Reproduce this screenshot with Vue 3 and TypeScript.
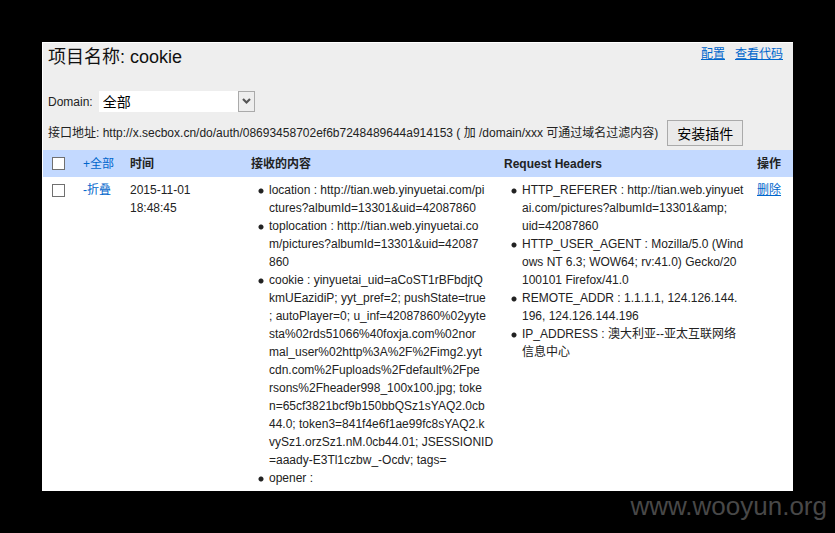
<script setup lang="ts">
import { ref } from 'vue'

interface Entry {
  id: number
  date: string
  time: string
  content: string[]
  headers: string[]
}

const domain = ref('all')
const allChecked = ref(false)
const selected = ref<number[]>([])

const entries: Entry[] = [
  {
    id: 1,
    date: '2015-11-01',
    time: '18:48:45',
    content: [
      'location : http://tian.web.yinyuetai.com/pi\nctures?albumId=13301&uid=42087860',
      'toplocation : http://tian.web.yinyuetai.co\nm/pictures?albumId=13301&uid=42087\n860',
      'cookie : yinyuetai_uid=aCoST1rBFbdjtQ\nkmUEazidiP; yyt_pref=2; pushState=true\n; autoPlayer=0; u_inf=42087860%02yyte\nsta%02rds51066%40foxja.com%02nor\nmal_user%02http%3A%2F%2Fimg2.yyt\ncdn.com%2Fuploads%2Fdefault%2Fpe\nrsons%2Fheader998_100x100.jpg; toke\nn=65cf3821bcf9b150bbQSz1sYAQ2.0cb\n44.0; token3=841f4e6f1ae99fc8sYAQ2.k\nvySz1.orzSz1.nM.0cb44.01; JSESSIONID\n=aaady-E3Tl1czbw_-Ocdv; tags=',
      'opener :',
    ],
    headers: [
      'HTTP_REFERER : http://tian.web.yinyuet\nai.com/pictures?albumId=13301&amp;\nuid=42087860',
      'HTTP_USER_AGENT : Mozilla/5.0 (Wind\nows NT 6.3; WOW64; rv:41.0) Gecko/20\n100101 Firefox/41.0',
      'REMOTE_ADDR : 1.1.1.1, 124.126.144.\n196, 124.126.144.196',
      'IP_ADDRESS : 澳大利亚--亚太互联网络\n信息中心',
    ],
  },
]

function toggleAll() {
  selected.value = allChecked.value ? entries.map((e) => e.id) : []
}
</script>

<template>
  <div class="page">
    <main class="panel">
      <header class="top">
        <div class="title-row">
          <h1>项目名称: cookie</h1>
          <nav>
            <a href="#config">配置</a>
            <a href="#code">查看代码</a>
          </nav>
        </div>
        <div class="domain-row">
          <label for="domain">Domain:</label>
          <div class="select">
            <select id="domain" v-model="domain">
              <option value="all">全部</option>
            </select>
            <span class="arrow">
              <svg width="9" height="7" viewBox="0 0 9 7" aria-hidden="true">
                <path d="M1 1L4.500 4.500L8 1" fill="none" stroke="#555" stroke-width="2.200" />
              </svg>
            </span>
          </div>
        </div>
        <div class="api-row">
          <span>接口地址: http://x.secbox.cn/do/auth/08693458702ef6b7248489644a914153 ( 加 /domain/xxx 可通过域名过滤内容)</span>
          <button type="button">安装插件</button>
        </div>
      </header>
      <table>
        <colgroup>
          <col class="c-check" />
          <col class="c-fold" />
          <col class="c-time" />
          <col />
          <col />
          <col class="c-op" />
        </colgroup>
        <thead>
          <tr>
            <th><input v-model="allChecked" type="checkbox" aria-label="全部" @change="toggleAll" /></th>
            <th><a class="plain" href="#all">+全部</a></th>
            <th>时间</th>
            <th>接收的内容</th>
            <th>Request Headers</th>
            <th>操作</th>
          </tr>
        </thead>
        <tbody>
          <tr v-for="entry in entries" :key="entry.id">
            <td><input v-model="selected" :value="entry.id" type="checkbox" aria-label="折叠" /></td>
            <td><a class="plain" href="#fold">-折叠</a></td>
            <td>{{ entry.date }}<br />{{ entry.time }}</td>
            <td>
              <ul>
                <li v-for="item in entry.content" :key="item">{{ item }}</li>
              </ul>
            </td>
            <td>
              <ul>
                <li v-for="item in entry.headers" :key="item">{{ item }}</li>
              </ul>
            </td>
            <td><a href="#delete">删除</a></td>
          </tr>
        </tbody>
      </table>
    </main>
    <footer>www.wooyun.org</footer>
  </div>
</template>

<style>
body {
  background: #000;
}
</style>

<style scoped>
.page {
  padding: 42px 42px 0;
  font: 12px/18px "Liberation Sans", Arial, "Noto Sans CJK SC", sans-serif;
  color: #222;
}
.panel {
  padding: 1px 0 0 1px;
  background: #fff;
}
.top {
  padding: 2px 10px 4px 5px;
  background: #eee;
}
.title-row {
  display: flex;
  justify-content: space-between;
  align-items: flex-start;
}
h1 {
  margin: 0;
  font-size: 18px;
  line-height: 24px;
  font-weight: 400;
  color: #111;
}
nav {
  display: flex;
  gap: 10px;
}
a {
  color: #06c;
  text-decoration: underline;
}
a.plain {
  text-decoration: none;
  font-weight: 400;
}
.domain-row {
  display: flex;
  align-items: center;
  gap: 6px;
  margin-top: 22px;
}
.select {
  position: relative;
  width: 156px;
  height: 21px;
}
select {
  width: 100%;
  height: 100%;
  padding: 0 20px 0 4px;
  border: 0;
  border-radius: 0;
  appearance: none;
  background: #fff;
  color: #000;
  font: 14px "Liberation Sans", "Noto Sans CJK SC", sans-serif;
}
.arrow {
  position: absolute;
  top: 0;
  right: 0;
  bottom: 0;
  display: flex;
  align-items: center;
  justify-content: center;
  width: 17px;
  box-sizing: border-box;
  border: 1px solid #aaa;
  background: #eee;
  pointer-events: none;
}
.api-row {
  display: flex;
  align-items: center;
  gap: 9px;
  margin-top: 8px;
  white-space: nowrap;
}
button {
  height: 26px;
  padding: 0 9px;
  border: 1px solid #aaa;
  border-radius: 0;
  background: #eaeaea;
  color: #000;
  font: 14px "Liberation Sans", "Noto Sans CJK SC", sans-serif;
}
table {
  width: 100%;
  table-layout: fixed;
  border-collapse: collapse;
}
.c-check {
  width: 35px;
}
.c-fold {
  width: 47px;
}
.c-time {
  width: 121px;
}
.c-op {
  width: 41px;
}
th,
td {
  padding: 4px 0 4px 5px;
  text-align: left;
  vertical-align: top;
  white-space: nowrap;
}
th {
  padding-top: 5px;
  background: #c3d9ff;
}
input {
  display: block;
  width: 13px;
  height: 13px;
  margin: 3px 4px 0;
  box-sizing: border-box;
  appearance: none;
  border: 1px solid #707070;
  background: #fff;
}
th input {
  margin-top: 2px;
}
input:checked {
  background: #06c;
}
ul {
  margin: 0;
  padding: 0;
  list-style: none;
}
li {
  padding-left: 18px;
  background: radial-gradient(circle at 10px 10px, #222 2px, transparent 3px) no-repeat;
  white-space: pre;
}
footer {
  margin-right: -34px;
  text-align: right;
  font-size: 26px;
  line-height: 30px;
  color: #484848;
}
</style>
